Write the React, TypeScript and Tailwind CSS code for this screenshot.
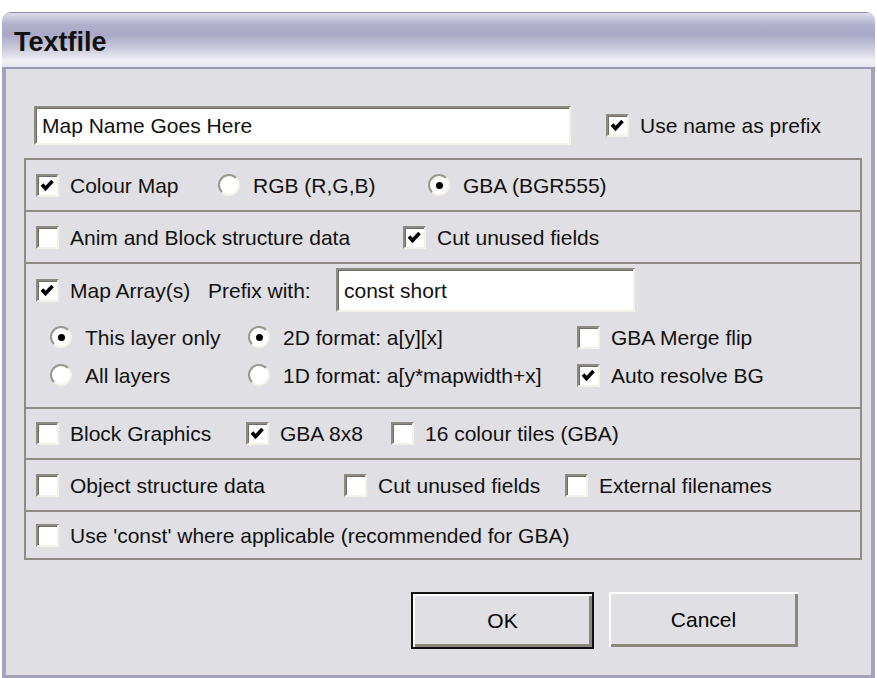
import React from 'react';

const font = { fontFamily: '"Liberation Sans", Arial, sans-serif' };

const CheckBox: React.FC<{ checked?: boolean }> = ({ checked }) => (
  <span className="relative inline-block w-[23px] h-[23px] shrink-0 bg-white border-2 border-t-[#8d8a83] border-l-[#8d8a83] border-r-[#f3f1e8] border-b-[#f3f1e8] shadow-[inset_1px_1px_0_#6f6d66]">
    {checked && (
      <svg viewBox="0 0 19 19" className="absolute inset-0 w-[19px] h-[19px]">
        <path d="M4 8.5 L7.5 12.5 L14.5 5" fill="none" stroke="#000" strokeWidth="3.6" strokeLinejoin="miter" />
      </svg>
    )}
  </span>
);

const Radio: React.FC<{ checked?: boolean }> = ({ checked }) => (
  <span className="relative inline-flex items-center justify-center w-[22px] h-[22px] shrink-0 rounded-full bg-white border-2 border-t-[#9a978f] border-l-[#9a978f] border-r-[#f3f1e8] border-b-[#f3f1e8]">
    {checked && <span className="w-[7px] h-[7px] rounded-full bg-black" />}
  </span>
);

const Check: React.FC<{ label: string; checked?: boolean; className?: string }> = ({ label, checked, className }) => (
  <div className={'flex items-center gap-[11px] ' + (className ?? '')}>
    <CheckBox checked={checked} />
    <span className="whitespace-nowrap">{label}</span>
  </div>
);

const Option: React.FC<{ label: string; checked?: boolean; className?: string }> = ({ label, checked, className }) => (
  <div className={'flex items-center gap-[13px] ' + (className ?? '')}>
    <Radio checked={checked} />
    <span className="whitespace-nowrap">{label}</span>
  </div>
);

const Button: React.FC<{ label: string; isDefault?: boolean; className?: string }> = ({ label, isDefault, className }) => (
  <button
    className={
      'flex items-center justify-center text-[21px] text-black bg-[#e0dfe3] ' +
      (isDefault
        ? 'border-2 border-[#111] shadow-[inset_2px_2px_0_#ffffff,inset_-3px_-3px_0_#8a877f] '
        : 'shadow-[inset_2px_2px_0_#ffffff,inset_-3px_-3px_0_#8a877f] ') +
      (className ?? '')
    }
  >
    {label}
  </button>
);

export default function App() {
  return (
    <div className="w-[877px] h-[678px] bg-white pt-[12px] px-[2px] text-[#111] text-[21px] leading-none" style={font}>
      <div className="h-[666px] flex flex-col rounded-t-[9px] overflow-hidden border-t border-[#8c8ca8]">
        {/* title bar */}
        <div className="h-[56px] shrink-0 flex items-center pl-[12px] pt-[4px] bg-[linear-gradient(to_bottom,#dcdce8_0%,#b0b0cc_22%,#a9a9c7_40%,#c9c9dc_65%,#f0f0f5_88%,#e6e6ef_100%)] border-b-[2px] border-[#9a9ab6]">
          <span className="text-[27px] font-bold text-[#111]">Textfile</span>
        </div>

        {/* client area */}
        <div className="flex-1 bg-[#e0dfe3] border-l-4 border-r-4 border-b-[3px] border-[#a4a3bc] flex flex-col">
          <div className="flex items-center pl-[28px] mt-[37px]">
            <div className="w-[537px] h-[39px] bg-white flex items-center pl-[6px] border-2 border-t-[#8d8a83] border-l-[#8d8a83] border-r-[#f3f1e8] border-b-[#f3f1e8] shadow-[inset_1px_1px_0_#6f6d66]">
              Map Name Goes Here
            </div>
            <Check label="Use name as prefix" checked className="ml-[35px]" />
          </div>

          <div className="ml-[18px] mt-[13px] w-[838px] border-l-2 border-r-2 border-b-2 border-[#8f8c85]">
            <div className="h-[52px] border-t-2 border-[#8f8c85] flex items-center px-[10px]">
              <Check label="Colour Map" checked className="w-[182px]" />
              <Option label="RGB (R,G,B)" className="w-[210px]" />
              <Option label="GBA (BGR555)" checked />
            </div>

            <div className="h-[52px] border-t-2 border-[#8f8c85] flex items-center px-[10px]">
              <Check label="Anim and Block structure data" className="w-[367px]" />
              <Check label="Cut unused fields" checked />
            </div>

            <div className="h-[145px] border-t-2 border-[#8f8c85] px-[10px] pt-[4px]">
              <div className="flex items-center h-[44px]">
                <Check label="Map Array(s)" checked className="w-[172px]" />
                <span className="w-[128px]">Prefix with:</span>
                <div className="w-[299px] h-[44px] bg-white flex items-center pl-[6px] border-2 border-t-[#8d8a83] border-l-[#8d8a83] border-r-[#f3f1e8] border-b-[#f3f1e8] shadow-[inset_1px_1px_0_#6f6d66]">
                  const short
                </div>
              </div>
              <div className="flex items-center h-[38px] mt-[6px] pl-[14px]">
                <Option label="This layer only" checked className="w-[198px]" />
                <Option label="2D format: a[y][x]" checked className="w-[329px]" />
                <Check label="GBA Merge flip" />
              </div>
              <div className="flex items-center h-[38px] pl-[14px]">
                <Option label="All layers" className="w-[198px]" />
                <Option label="1D format: a[y*mapwidth+x]" className="w-[329px]" />
                <Check label="Auto resolve BG" checked />
              </div>
            </div>

            <div className="h-[51px] border-t-2 border-[#8f8c85] flex items-center px-[10px]">
              <Check label="Block Graphics" className="w-[210px]" />
              <Check label="GBA 8x8" checked className="w-[145px]" />
              <Check label="16 colour tiles (GBA)" />
            </div>

            <div className="h-[52px] border-t-2 border-[#8f8c85] flex items-center px-[10px]">
              <Check label="Object structure data" className="w-[308px]" />
              <Check label="Cut unused fields" className="w-[221px]" />
              <Check label="External filenames" />
            </div>

            <div className="h-[48px] border-t-2 border-[#8f8c85] flex items-center px-[10px]">
              <Check label="Use 'const' where applicable (recommended for GBA)" />
            </div>
          </div>

          <div className="flex justify-end gap-[15px] pr-[73px] mt-[32px]">
            <Button label="OK" isDefault className="w-[183px] h-[57px]" />
            <Button label="Cancel" className="w-[189px] h-[55px]" />
          </div>
        </div>
      </div>
    </div>
  );
}
